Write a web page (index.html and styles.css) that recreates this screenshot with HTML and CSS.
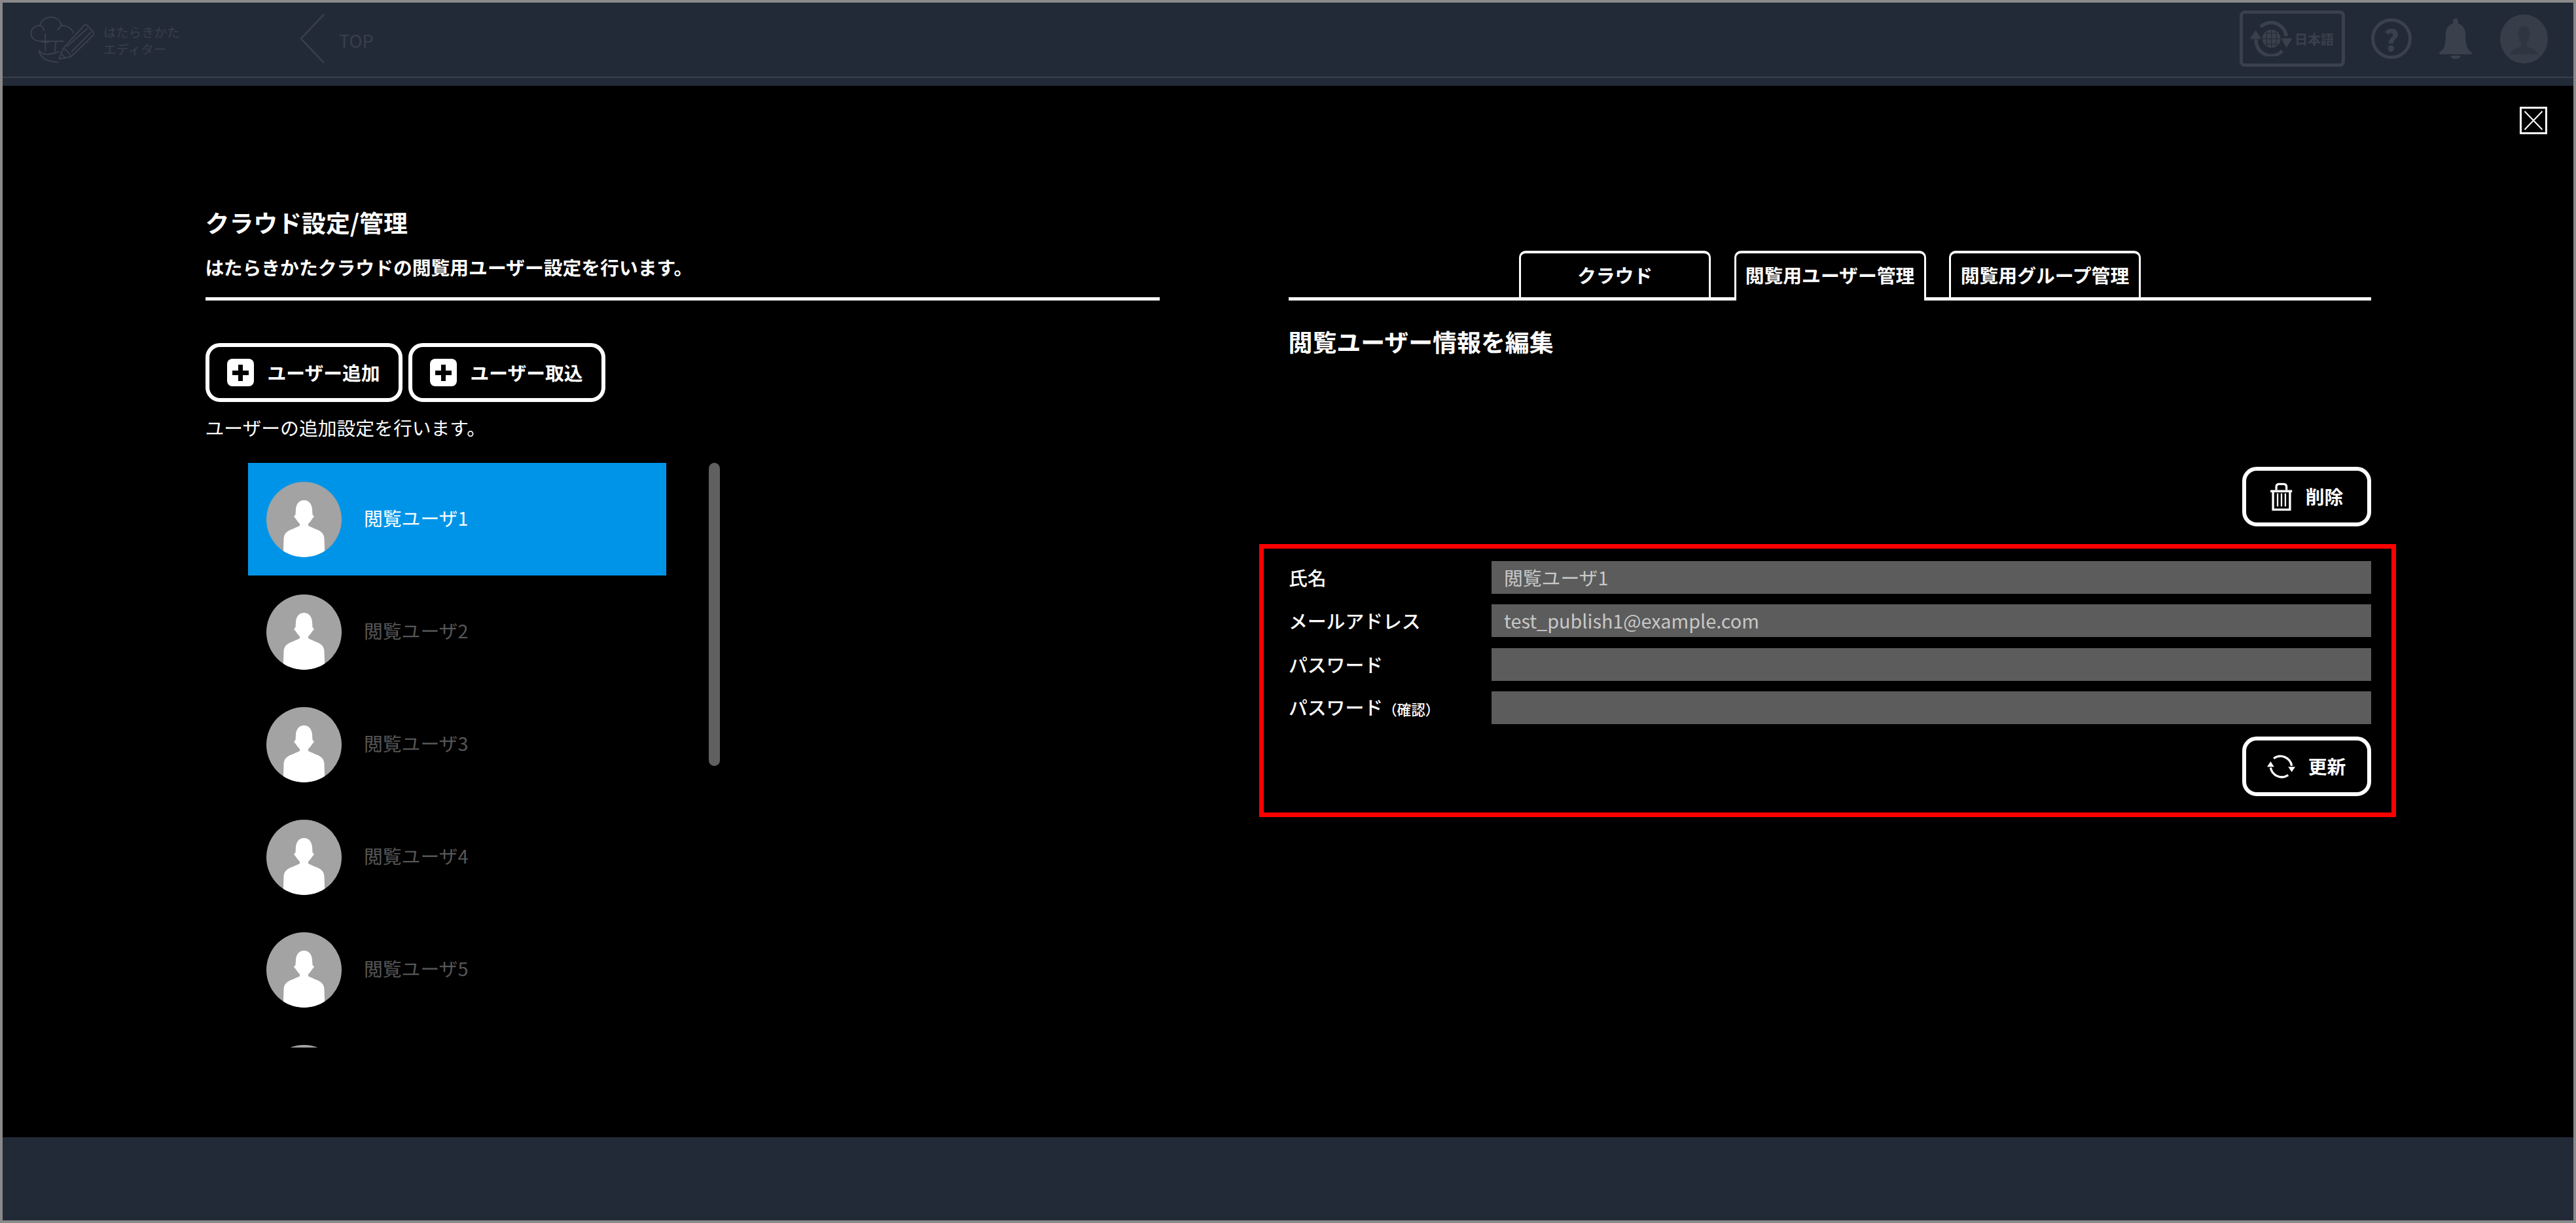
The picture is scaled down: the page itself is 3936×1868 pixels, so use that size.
FILE: index.html
```html
<!DOCTYPE html>
<html lang="ja">
<head>
<meta charset="utf-8">
<title>クラウド設定/管理</title>
<link rel="stylesheet" href="styles.css">
</head>
<body>
<svg class="defs" width="0" height="0" aria-hidden="true">
  <defs>
    <symbol id="person" viewBox="0 0 115 115">
      <path d="M57.500 28C50 28 45.500 34 45 42L44.500 50 42 53 45 56.500C47 60 49 62 51 64L51 67C46 70 38 72 32 76 28 79 26.500 83 26.500 88L25.500 115H89.500L88.500 88C88.500 83 87 79 83 76 77 72 69 70 64 67L64 64C66 62 68 60 70 56.500L73 53 70.500 50 70 42C69.500 34 65 28 57.500 28Z"/>
    </symbol>
    <symbol id="plus" viewBox="0 0 41 42">
      <rect width="41" height="42" rx="8" fill="#fff"/>
      <path d="M17 9h7v9h9v7h-9v9h-7v-9H8v-7h9z" fill="#000"/>
    </symbol>
  </defs>
</svg>
<div class="app">
  <header class="topbar">
    <div class="topbar-row">
      <svg class="logo" viewBox="25 25 310 230" fill="none" stroke="#3a414c" stroke-width="6" stroke-linecap="round" stroke-linejoin="round">
        <path d="M185 146H75C48 146 30 126 32 105 35 85 55 70 75 72 80 45 105 30 130 32 155 33 172 50 178 72 200 68 225 85 232 105"/>
        <path d="M160 92C165 82 170 76 178 72M75 72C85 75 92 85 95 95"/>
        <path d="M100 112V190M85 150H115M150 150L145 195"/>
        <path d="M70 190C75 225 110 245 160 245M75 195C90 215 130 208 165 196"/>
        <path d="M165 230L185 180 285 70Q293 64 300 72L328 103Q332 112 325 120L222 220ZM190 180L222 215M205 170L300 85M225 195L315 105M175 205L195 226"/>
      </svg>
      <div class="logo-text"><span>はたらきかた</span><span>エディター</span></div>
      <svg class="back" viewBox="0 0 38 76" fill="none" stroke="#3a414c" stroke-width="2.500"><path d="M37 1L2 38 37 75"/></svg>
      <span class="top-link">TOP</span>
      <div class="topbar-tools">
        <div class="lang">
          <svg class="lang-icon" viewBox="70 65 192 163">
            <path d="M118 92A70 70 0 0 1 236 135M218 203A70 70 0 0 1 97 150" fill="none" stroke="#3a414c" stroke-width="16"/>
            <path d="M212 145H264L238 188ZM68 148H122L95 108Z" fill="#3a414c"/>
            <circle cx="168" cy="147" r="42" fill="#3a414c"/>
            <path d="M128 147H208M168 107V187M140 122H196M140 172H196M150 112C142 135 142 160 150 182M186 112C194 135 194 160 186 182" fill="none" stroke="#232a37" stroke-width="3"/>
          </svg>
          <span>日本語</span>
        </div>
        <div class="help">?</div>
        <svg class="bell" viewBox="0 0 50 62" fill="#3a414c">
          <path d="M25 0c2.500 0 4 2 4 5v3c7 2 11 8 11 16 0 11 1 19 5 24 2 2.500 5 3 5 5 0 1.500-1 2-3 2H3c-2 0-3-.5-3-2 0-2 3-2.500 5-5 4-5 5-13 5-24 0-8 4-14 11-16V5c0-3 1.500-5 4-5z"/>
          <path d="M17 57h16c-1 3-4 5-8 5s-7-2-8-5z"/>
        </svg>
        <svg class="me" viewBox="0 0 73 75">
          <ellipse cx="36.500" cy="37.500" rx="36.500" ry="37.500" fill="#373d49"/>
          <path d="M36.500 18c-6 0-9 5-9 11 0 7 2.500 12 5 15v4c-3 3-15 5-18 13h44c-3-8-15-10-18-13v-4c2.500-3 5-8 5-15 0-6-3-11-9-11z" fill="#303641"/>
        </svg>
      </div>
    </div>
    <div class="topbar-line"></div>
  </header>

  <main class="panel">
    <button class="close" type="button" aria-label="閉じる">
      <svg viewBox="0 0 35 36" fill="none" stroke="#fff" stroke-width="2"><path d="M4 4L31 32M31 4L4 32"/></svg>
    </button>

    <section class="col-left">
      <h1 class="title">クラウド設定/管理</h1>
      <p class="lead">はたらきかたクラウドの閲覧用ユーザー設定を行います。</p>
      <div class="actions">
        <button class="btn btn-add" type="button"><svg class="ico-plus"><use href="#plus"/></svg>ユーザー追加</button>
        <button class="btn btn-add" type="button"><svg class="ico-plus"><use href="#plus"/></svg>ユーザー取込</button>
      </div>
      <p class="hint">ユーザーの追加設定を行います。</p>
      <div class="list-wrap">
        <ul class="user-list">
          <li class="user is-active"><span class="avatar"><svg><use href="#person"/></svg></span><span class="user-name">閲覧ユーザ1</span></li>
          <li class="user"><span class="avatar"><svg><use href="#person"/></svg></span><span class="user-name">閲覧ユーザ2</span></li>
          <li class="user"><span class="avatar"><svg><use href="#person"/></svg></span><span class="user-name">閲覧ユーザ3</span></li>
          <li class="user"><span class="avatar"><svg><use href="#person"/></svg></span><span class="user-name">閲覧ユーザ4</span></li>
          <li class="user"><span class="avatar"><svg><use href="#person"/></svg></span><span class="user-name">閲覧ユーザ5</span></li>
          <li class="user"><span class="avatar"><svg><use href="#person"/></svg></span></li>
        </ul>
        <div class="scrollbar"></div>
      </div>
    </section>

    <section class="col-right">
      <nav class="tabs">
        <div class="tab">クラウド</div>
        <div class="tab is-current">閲覧用ユーザー管理</div>
        <div class="tab">閲覧用グループ管理</div>
      </nav>
      <h2 class="subtitle">閲覧ユーザー情報を編集</h2>
      <div class="row-end row-delete">
        <button class="btn btn-side" type="button">
          <svg class="ico-trash" viewBox="85 55 105 133" fill="none" stroke="#fff" stroke-width="10">
            <path d="M115 90V75Q115 62 128 62H148Q162 62 162 75V90"/>
            <path d="M88 95H188" stroke-width="11"/>
            <path d="M100 95V180H178V95"/>
            <path d="M121 105V165M139 105V165M157 105V165" stroke-width="7"/>
          </svg>削除</button>
      </div>
      <form class="form">
        <div class="fields">
          <div class="label">氏名</div><div class="field">閲覧ユーザ1</div>
          <div class="label">メールアドレス</div><div class="field">test_publish1@example.com</div>
          <div class="label">パスワード</div><div class="field"></div>
          <div class="label">パスワード<small>（確認）</small></div><div class="field"></div>
        </div>
        <div class="row-end row-update">
          <button class="btn btn-side" type="button">
            <svg class="ico-sync" viewBox="72 55 128 113" fill="none" stroke="#fff" stroke-width="10">
              <path d="M102 74A52 52 0 0 1 184 108M168 150A52 52 0 0 1 88 116"/>
              <path d="M168 112H200L184 136ZM72 112H104L88 88Z" fill="#fff" stroke="none"/>
            </svg>更新</button>
        </div>
      </form>
    </section>
  </main>

  <footer class="bottombar"></footer>
</div>
</body>
</html>
```
FILE: styles.css
```css
* { box-sizing: border-box; }
html, body { margin: 0; padding: 0; background: #000; }
body {
  font-family: "Noto Sans CJK JP", "Noto Sans", sans-serif;
  color: #fff;
  font-size: 28.800px;
}
.defs { position: absolute; }
.app {
  width: 3936px;
  height: 1868px;
  border: 4px solid #8a8a8a;
  display: flex;
  flex-direction: column;
  overflow: hidden;
}

/* top bar */
.topbar { height: 127px; background: #232a37; flex: none; }
.topbar-row {
  height: 110px;
  padding: 0 39px 0 41px;
  display: flex;
  align-items: center;
}
.topbar-line { height: 2px; margin-top: 3px; background: #3a404c; }
.logo { width: 100px; height: 74px; margin-top: 4px; flex: none; }
.logo-text {
  margin-left: 13px;
  margin-top: 5px;
  display: flex;
  flex-direction: column;
  gap: 6px;
  font-size: 19.500px;
  line-height: 20px;
  color: #383f4b;
  width: 113px;
  white-space: nowrap;
}
.back { width: 38px; height: 76px; margin-left: 187px; flex: none; }
.top-link { margin-left: 22px; margin-top: 6px; font-size: 27px; line-height: 30px; color: #383f4b; }
.topbar-tools { margin-left: auto; display: flex; align-items: center; }
.lang {
  width: 161px;
  height: 86px;
  border: 5px solid #3a414c;
  border-radius: 8px;
  padding-left: 11px;
  display: flex;
  align-items: center;
  gap: 4px;
  font-size: 20px;
  font-weight: 700;
  color: #3a414c;
  white-space: nowrap;
}
.lang-icon { width: 64px; height: 54px; flex: none; }
.help {
  width: 62px;
  height: 62px;
  margin-left: 40px;
  border: 5px solid #3a414c;
  border-radius: 50%;
  display: flex;
  align-items: center;
  justify-content: center;
  font-size: 44px;
  font-weight: 900;
  line-height: 1;
  color: #3a414c;
}
.bell { width: 50px; height: 62px; margin-left: 42px; flex: none; }
.me { width: 73px; height: 75px; margin-left: 43px; flex: none; }

/* panel */
.panel {
  position: relative;
  flex: 1;
  min-height: 0;
  background: #000;
  padding: 190px 309.500px 0 309.500px;
  display: grid;
  grid-template-columns: 1458px 1654px;
  column-gap: 197px;
}
.close {
  position: absolute;
  top: 32px;
  right: 40px;
  width: 42px;
  height: 42px;
  padding: 0;
  background: #000;
  border: 3px solid #fff;
  display: flex;
}
.close svg { width: 100%; height: 100%; }

.col-left, .col-right { min-width: 0; }
.title { margin: 0; font-size: 36.900px; line-height: 36px; font-weight: 700; }
.lead {
  margin: 37px 0 0;
  padding-bottom: 32px;
  border-bottom: 5px solid #fff;
  line-height: 28px;
  font-weight: 700;
}
.actions { margin-top: 65px; display: flex; gap: 9px; }
.btn {
  border: 6px solid #fff;
  border-radius: 22px;
  background: #000;
  color: #fff;
  font-family: inherit;
  font-size: 28.800px;
  font-weight: 700;
  line-height: 1;
  display: inline-flex;
  align-items: center;
  justify-content: center;
  padding: 0;
}
.btn-add { width: 301px; height: 90px; gap: 20px; }
.ico-plus { width: 41px; height: 42px; flex: none; }
.hint { margin: 25px 0 0; line-height: 28px; }

.list-wrap { margin-top: 40px; display: flex; height: 893px; overflow: hidden; padding-left: 65.500px; }
.user-list { margin: 0; padding: 0; list-style: none; width: 638.500px; flex: none; }
.user {
  height: 172px;
  padding-left: 28px;
  display: flex;
  align-items: center;
  gap: 34px;
  color: #565656;
  line-height: 28px;
}
.user-name { margin-top: -4px; }
.user.is-active { background: #0094e8; color: #fff; }
.avatar {
  width: 115px;
  height: 115px;
  border-radius: 50%;
  background: #a3a3a3;
  overflow: hidden;
  flex: none;
  display: block;
}
.avatar svg { width: 115px; height: 115px; fill: #fff; display: block; }
.scrollbar {
  width: 17px;
  height: 463px;
  margin-left: 65px;
  border-radius: 9px;
  background: #606060;
  flex: none;
}

/* right column */
.tabs {
  margin-top: 62px;
  height: 76px;
  padding-left: 352.500px;
  border-bottom: 5px solid #fff;
  display: flex;
  align-items: flex-start;
  gap: 35.500px;
}
.tab {
  width: 293px;
  height: 71px;
  border: 3px solid #fff;
  border-top-width: 4px;
  border-bottom-width: 0;
  border-radius: 10px 10px 0 0;
  background: #000;
  display: flex;
  align-items: center;
  justify-content: center;
  font-size: 28.800px;
  font-weight: 700;
  line-height: 1;
  white-space: nowrap;
}
.tab.is-current { height: 76px; padding-bottom: 5px; position: relative; z-index: 1; }
.subtitle { margin: 44px 0 0; font-size: 36.900px; line-height: 36px; font-weight: 700; }
.row-end { display: flex; justify-content: flex-end; }
.row-delete { margin-top: 174px; }
.btn-side { width: 197px; height: 91px; gap: 20px; }
.ico-trash { width: 35px; height: 44px; flex: none; }
.ico-sync { width: 43px; height: 38px; flex: none; }

.form {
  margin: 27px -38.500px 0 -44.500px;
  padding: 19px 31.500px 25px 38px;
  border: 7px solid #f00;
}
.fields {
  display: grid;
  grid-template-columns: 310px 1fr;
  grid-auto-rows: 50px;
  row-gap: 16.400px;
  align-items: center;
}
.label { line-height: 28px; font-weight: 500; white-space: nowrap; }
.label small { font-size: 21.600px; }
.field {
  height: 50px;
  padding-left: 19px;
  background: #5c5c5c;
  color: #c8c8c8;
  line-height: 50px;
}
.row-update { margin-top: 19px; }

.bottombar { height: 127px; flex: none; background: #232a37; }
```
